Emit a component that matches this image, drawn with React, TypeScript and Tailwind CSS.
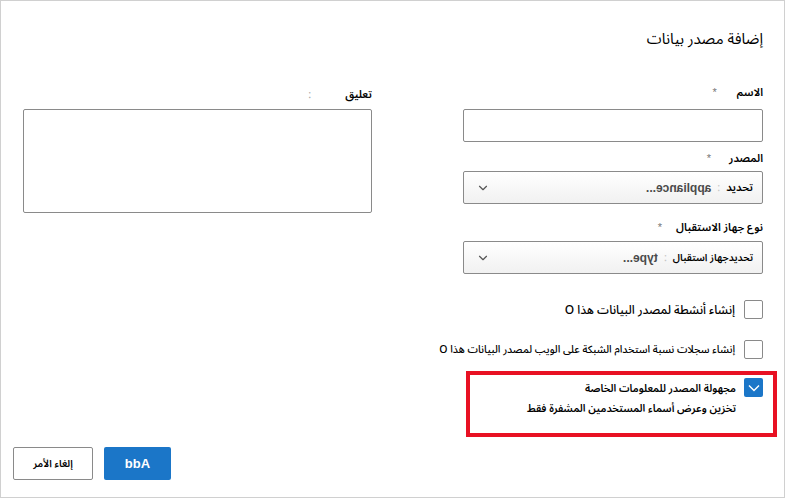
import { ChevronDown } from "lucide-react";

const FONT = "font-['Noto_Sans_Arabic_UI','Noto_Sans_Arabic','DejaVu_Sans',sans-serif]";

function FieldLabel({ text, gap }: { text: string; gap: string }) {
  return (
    <div className={`flex items-center h-4 text-[11px] font-semibold text-black ${gap}`}>
      <span>{text}</span>
      <span className="text-[#777] text-[11px] font-normal font-['Liberation_Sans',sans-serif]">*</span>
    </div>
  );
}

function FakeSelect({ label, value, labelSize }: { label: string; value: string; labelSize: string }) {
  return (
    <div className="flex items-center h-[33px] w-[300px] rounded-[2px] border border-[#8a8a8a] bg-gradient-to-b from-white to-[#f1f1f1] pr-[9px] pl-[12px]">
      <span className={`${labelSize} font-semibold text-black`}>{label}</span>
      <span className="text-[11px] text-[#c4c4c4] mx-[6px]">:</span>
      <span
        dir="ltr"
        className="inline-block -scale-x-100 text-[12px] font-bold text-[#4a4a4a] font-['Liberation_Sans',sans-serif]"
      >
        {value}
      </span>
      <ChevronDown className="mr-auto w-[14px] h-[14px] text-[#555]" strokeWidth={2} />
    </div>
  );
}

export default function App() {
  return (
    <div
      dir="rtl"
      className={`w-[785px] h-[498px] border border-[#d0d0d0] bg-white pr-[21px] pl-[12px] ${FONT}`}
    >
      <h1 className="mt-[26px] h-[22px] text-[15px] leading-[22px] font-normal text-black">
        إضافة مصدر بيانات
      </h1>

      <div className="mt-[35px] flex gap-[91px]">
        <div className="w-[300px] flex flex-col">
          <FieldLabel text="الاسم" gap="gap-[20px]" />
          <div className="mt-[9px] h-[33px] w-[300px] rounded-[2px] border border-[#8a8a8a] bg-white" />
          <div className="mt-[8px]">
            <FieldLabel text="المصدر" gap="gap-[18px]" />
          </div>
          <div className="mt-[5px]">
            <FakeSelect label="تحديد" value="appliance..." labelSize="text-[11px]" />
          </div>
          <div className="mt-[15px]">
            <FieldLabel text="نوع جهاز الاستقبال" gap="gap-[14px]" />
          </div>
          <div className="mt-[6px]">
            <FakeSelect label="تحديدجهاز استقبال" value="type..." labelSize="text-[10px] tracking-tight" />
          </div>
        </div>

        <div className="w-[349px] flex flex-col">
          <div className="flex items-center h-4 mt-[2px] gap-[34px] text-[11px] font-semibold text-black">
            <span>تعليق</span>
            <span className="text-[#aaa] font-normal text-[11px]">:</span>
          </div>
          <div className="mt-[7px] h-[104px] w-[349px] rounded-[2px] border border-[#8a8a8a] bg-white" />
        </div>
      </div>

      <div className="mt-[26px] flex flex-col">
        <label className="flex items-center gap-[9px] h-[19px]">
          <span className="w-[19px] h-[19px] rounded-[2px] border border-[#8a8a8a] bg-white shrink-0" />
          <span className="text-[12px] font-medium text-black">إنشاء أنشطة لمصدر البيانات هذا O</span>
        </label>

        <label className="mt-[21px] flex items-center gap-[9px] h-[19px]">
          <span className="w-[19px] h-[19px] rounded-[2px] border border-[#8a8a8a] bg-white shrink-0" />
          <span className="text-[10.5px] font-medium text-black">
            إنشاء سجلات نسبة استخدام الشبكة على الويب لمصدر البيانات هذا O
          </span>
        </label>

        <div className="mt-[12px] mr-[-14px] w-[311px] h-[66px] border-4 border-[#e81123] pt-[3px] pr-[10px]">
          <div className="flex items-start gap-[8px]">
            <span className="w-[19px] h-[19px] rounded-[2px] bg-[#1b76c8] shrink-0 flex items-center justify-center">
              <svg width="12" height="8" viewBox="0 0 12 8" fill="none">
                <polyline points="1,1.5 6,6.5 11,1.5" stroke="white" strokeWidth="1.4" />
              </svg>
            </span>
            <div className="flex flex-col text-[10.5px] font-semibold text-black leading-[20px]">
              <span>مجهولة المصدر للمعلومات الخاصة</span>
              <span>تخزين وعرض أسماء المستخدمين المشفرة فقط</span>
            </div>
          </div>
        </div>
      </div>

      <div className="mt-[10px] flex flex-row-reverse justify-start gap-[11px]">
        <button className="w-[80px] h-[33px] rounded-[2px] border border-[#8a8a8a] bg-white text-[10px] font-semibold text-black">
          إلغاء الأمر
        </button>
        <button className="w-[67px] h-[33px] rounded-[2px] bg-[#1b76c8] text-[13px] font-semibold text-white font-['Liberation_Sans',sans-serif]">
          bbA
        </button>
      </div>
    </div>
  );
}
